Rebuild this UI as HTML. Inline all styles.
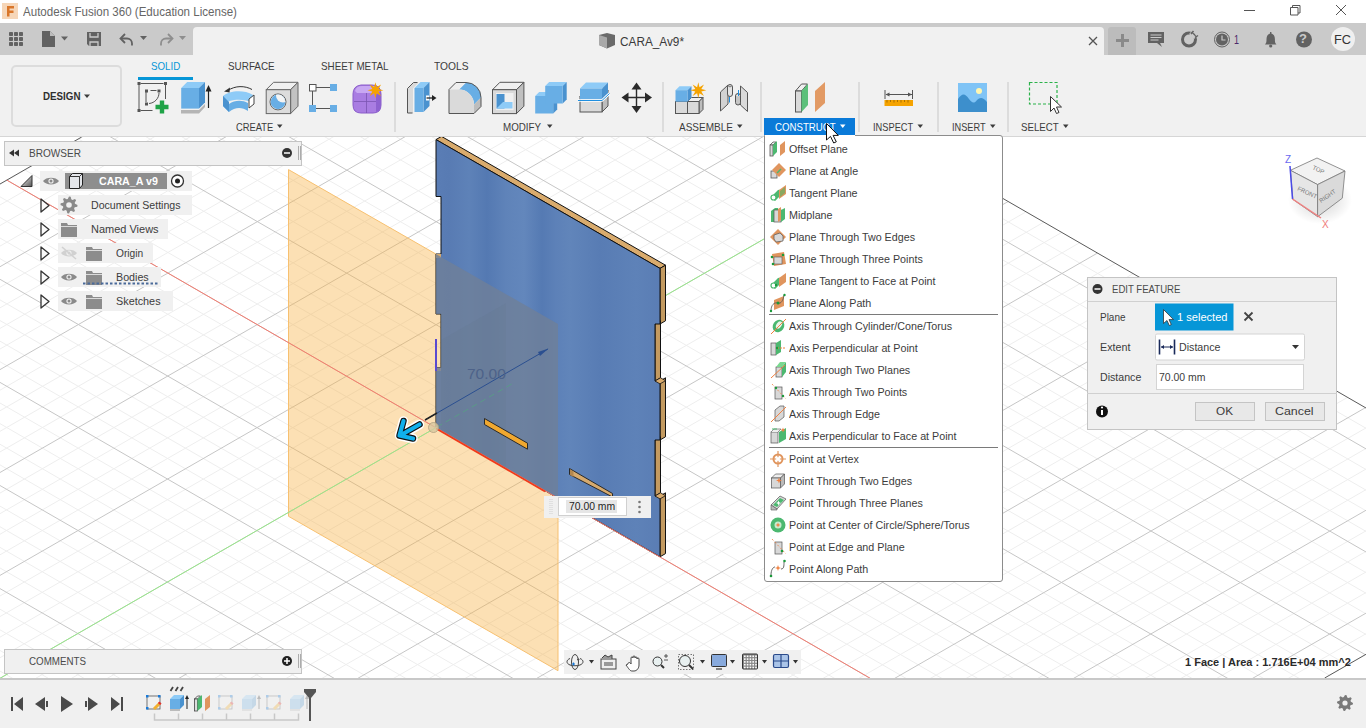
<!DOCTYPE html>
<html><head><meta charset="utf-8"><style>
html,body{margin:0;padding:0}
body{width:1366px;height:728px;overflow:hidden;position:relative;background:#fff;font-family:"Liberation Sans",sans-serif}
.t{position:absolute;white-space:nowrap;transform-origin:0 0}
.r{position:absolute}
</style></head><body>
<div class="r" style="left:0px;top:0px;width:1366px;height:23px;background:#ffffff;"></div>
<div class="t" style="left:23px;top:5px;font-size:13px;line-height:13px;color:#666666;transform:scaleX(0.8890);">Autodesk Fusion 360 (Education License)</div>
<div class="r" style="left:0px;top:23px;width:1366px;height:32px;background:#cacaca;"></div>
<div class="r" style="left:193px;top:27px;width:911px;height:28px;background:#f1f1f1;border-radius:4px 4px 0 0;"></div>
<div class="t" style="left:620px;top:36px;font-size:12px;line-height:12px;color:#3a3a3a;transform:scaleX(0.9825);">CARA_Av9*</div>
<div class="r" style="left:1108px;top:27px;width:28px;height:28px;background:#bcbcbc;border-radius:3px 3px 0 0;"></div>
<div class="r" style="left:0px;top:55px;width:1366px;height:81px;background:#f1f1f1;"></div>
<div class="r" style="left:0px;top:136px;width:1366px;height:1px;background:#d6d6d6;"></div>
<div class="r" style="left:11px;top:65px;width:111px;height:62px;background:#f1f1f1;border:2px solid #dcdcdc;border-radius:5px;box-sizing:border-box;"></div>
<div class="t" style="left:42.5px;top:91px;font-size:11px;line-height:11px;color:#2e2e2e;font-weight:bold;transform:scaleX(0.8889);">DESIGN</div>
<div class="t" style="left:151px;top:61px;font-size:11px;line-height:11px;color:#0696d7;transform:scaleX(0.8870);">SOLID</div>
<div class="r" style="left:138px;top:77px;width:55px;height:3px;background:#0696d7;"></div>
<div class="t" style="left:228px;top:61px;font-size:11px;line-height:11px;color:#3c3c3c;transform:scaleX(0.8989);">SURFACE</div>
<div class="t" style="left:321px;top:61px;font-size:11px;line-height:11px;color:#3c3c3c;transform:scaleX(0.8950);">SHEET METAL</div>
<div class="t" style="left:434px;top:61px;font-size:11px;line-height:11px;color:#3c3c3c;transform:scaleX(0.9297);">TOOLS</div>
<div class="t" style="left:236px;top:122px;font-size:11px;line-height:11px;color:#3c3c3c;transform:scaleX(0.8514);">CREATE</div>
<div class="t" style="left:503px;top:122px;font-size:11px;line-height:11px;color:#3c3c3c;transform:scaleX(0.8882);">MODIFY</div>
<div class="t" style="left:679px;top:122px;font-size:11px;line-height:11px;color:#3c3c3c;transform:scaleX(0.9100);">ASSEMBLE</div>
<div class="r" style="left:764px;top:118px;width:91px;height:17px;background:#0a7ad8;"></div>
<div class="t" style="left:775px;top:122px;font-size:11px;line-height:11px;color:#ffffff;transform:scaleX(0.8793);">CONSTRUCT</div>
<div class="t" style="left:873px;top:122px;font-size:11px;line-height:11px;color:#3c3c3c;transform:scaleX(0.8430);">INSPECT</div>
<div class="t" style="left:952px;top:122px;font-size:11px;line-height:11px;color:#3c3c3c;transform:scaleX(0.8346);">INSERT</div>
<div class="t" style="left:1021px;top:122px;font-size:11px;line-height:11px;color:#3c3c3c;transform:scaleX(0.8829);">SELECT</div>
<div class="r" style="left:394px;top:82px;width:2px;height:50px;background:#dcdcdc;"></div>
<div class="r" style="left:662px;top:82px;width:2px;height:50px;background:#dcdcdc;"></div>
<div class="r" style="left:760px;top:82px;width:2px;height:50px;background:#dcdcdc;"></div>
<div class="r" style="left:858px;top:82px;width:2px;height:50px;background:#dcdcdc;"></div>
<div class="r" style="left:937px;top:82px;width:2px;height:50px;background:#dcdcdc;"></div>
<div class="r" style="left:1007px;top:82px;width:2px;height:50px;background:#dcdcdc;"></div>
<svg width="1366" height="137" style="position:absolute;left:0;top:0"><rect x="9" y="32" width="4" height="4" rx="0.7" fill="#626262"/><rect x="9" y="37" width="4" height="4" rx="0.7" fill="#626262"/><rect x="9" y="42" width="4" height="4" rx="0.7" fill="#626262"/><rect x="14" y="32" width="4" height="4" rx="0.7" fill="#626262"/><rect x="14" y="37" width="4" height="4" rx="0.7" fill="#626262"/><rect x="14" y="42" width="4" height="4" rx="0.7" fill="#626262"/><rect x="19" y="32" width="4" height="4" rx="0.7" fill="#626262"/><rect x="19" y="37" width="4" height="4" rx="0.7" fill="#626262"/><rect x="19" y="42" width="4" height="4" rx="0.7" fill="#626262"/><path d="M42,31h8l5,5v11h-13z" fill="#626262"/><path d="M50,31v5h5" fill="#bdbdbd"/><polygon points="61,36.5 68,36.5 64.5,40.5" fill="#626262"/><path d="M87,32h14v14h-12l-2,-2z" fill="#626262"/><path d="M90,33v4h8v-4M90,46v-4h8v4" stroke="#cacaca" stroke-width="1.3" fill="none"/><path d="M121,38.5h6a5,5 0 0,1 5,5v2" stroke="#626262" stroke-width="1.8" fill="none"/><path d="M125,34l-4.5,4.5l4.5,4.5" stroke="#626262" stroke-width="1.8" fill="none"/><polygon points="140,36 147,36 143.5,40" fill="#626262"/><path d="M172,38.5h-6a5,5 0 0,0 -5,5v2" stroke="#8e8e8e" stroke-width="1.8" fill="none"/><path d="M168,34l4.5,4.5l-4.5,4.5" stroke="#8e8e8e" stroke-width="1.8" fill="none"/><polygon points="179,36 186,36 182.5,40" fill="#8e8e8e"/><polygon points="599,35 607,33 615,35 615,45 607,48.5 599,45" fill="#6a6a6a"/><polygon points="599,35 607,37.5 607,48.5 599,45" fill="#a9a9a9"/><path d="M1089,37l8,8M1097,37l-8,8" stroke="#555" stroke-width="1.3"/><path d="M1122.5,34v13M1116,40.5h13" stroke="#8a8a8a" stroke-width="3"/><path d="M1148,32h16v11h-4l2,4l-5,-4h-9z" fill="#626262"/><path d="M1150.5,35h11M1150.5,37.5h11M1150.5,40h8" stroke="#cacaca" stroke-width="1"/><circle cx="1189" cy="39.5" r="6.5" stroke="#626262" stroke-width="3" fill="none"/><path d="M1190,33l5,5" stroke="#cacaca" stroke-width="2.5"/><path d="M1191,34l2.5,-3M1195,37.5l3,-2" stroke="#626262" stroke-width="1.5"/><circle cx="1222" cy="39.5" r="7.5" stroke="#626262" stroke-width="1" fill="none"/><circle cx="1222" cy="39.5" r="6" fill="#626262"/><path d="M1222,35.5v4.5h3.5" stroke="#cacaca" stroke-width="1.2" fill="none"/><path d="M1265,44.5c1.5,-1.5 1.5,-3 1.5,-5.5c0,-3 1.5,-5 3.5,-5.5v-1.5h1.4v1.5c2,0.5 3.5,2.5 3.5,5.5c0,2.5 0,4 1.5,5.5z" fill="#626262"/><circle cx="1270.7" cy="46" r="1.6" fill="#626262"/><circle cx="1304" cy="39.5" r="8" fill="#626262"/><circle cx="1343" cy="39" r="12" fill="#efefef"/><path d="M1244,10.5h11" stroke="#555" stroke-width="1"/><path d="M1290.5,7.5h7.5v7.5h-7.5z M1292.5,7.5v-2h7.5v7.5h-2" stroke="#555" stroke-width="1" fill="none"/><path d="M1336,5l10,10M1346,5l-10,10" stroke="#555" stroke-width="1"/><rect x="2" y="3" width="16" height="16" fill="#f6d6b8"/><path d="M7,6h7v2.5h-4.5v2h4v2.5h-4v3.5h-2.5z" fill="#d9762a"/><g stroke="#555" stroke-width="1" fill="none"><path d="M140.5,83.5h23M139,85v24M165.5,85v14M140.5,110.5h12M150.5,90.5h6M146,92v10M159,93c0,5 -4,10 -10,10.5"/></g><rect x="137.5" y="82" width="3" height="3" fill="#555"/><rect x="164" y="82" width="3" height="3" fill="#555"/><rect x="137.5" y="109" width="3" height="3" fill="#555"/><rect x="145" y="89.5" width="3" height="3" fill="#555"/><rect x="157.5" y="89.5" width="3" height="3" fill="#555"/><rect x="145" y="102.5" width="3" height="3" fill="#555"/><path d="M162,100.5v13M155.5,107h13" stroke="#1fa347" stroke-width="4.4"/><polygon points="181,110 199,110 205,104 205,107 199,113.5 181,113.5" fill="#b5b5b5"/><polygon points="181.2,88 187.2,82 205.0,82 199.0,88" fill="#8ecbf7" stroke="none" stroke-width="1" stroke-linejoin="round"/><polygon points="199.0,88 205.0,82 205.0,102.6 199.0,108.6" fill="#4a92cf" stroke="none" stroke-width="1" stroke-linejoin="round"/><rect x="181.2" y="88" width="17.8" height="20.6" fill="#68aee5" stroke="none" stroke-width="1"/><path d="M208.5,108V90" stroke="#222" stroke-width="1.2"/><polygon points="205.5,91.5 211.5,91.5 208.5,85" fill="#222"/><path d="M223,96c6,-5 20,-7 30,-1v8c-10,-5 -24,-4 -30,2z" fill="#8ecbf7"/><path d="M223,96v10l6,6c6,-5 13,-5 19,-1v-8c-6,-3 -13,-3 -19,1z" fill="#68aee5"/><path d="M223,96l6,6v10l-6,-6z" fill="#4a92cf"/><path d="M249,99l5,-4v9l-5,4z" fill="#fff" stroke="#444" stroke-width="1"/><path d="M252,89.5c-7,-4 -17,-4 -24,1" stroke="#333" stroke-width="1" fill="none"/><polygon points="224,91.5 230,87.5 229.5,92.5" fill="#333"/><polygon points="266.2,89.7 273.59999999999997,82.3 297.99999999999994,82.3 290.59999999999997,89.7" fill="#f0f0f0" stroke="#666" stroke-width="1" stroke-linejoin="round"/><polygon points="290.59999999999997,89.7 297.99999999999994,82.3 297.99999999999994,106.19999999999999 290.59999999999997,113.6" fill="#c2c2c2" stroke="#666" stroke-width="1" stroke-linejoin="round"/><rect x="266.2" y="89.7" width="24.4" height="23.9" fill="#dcdcdc" stroke="#666" stroke-width="1"/><defs><clipPath id="hc"><circle cx="278" cy="101.9" r="7.3"/></clipPath></defs><circle cx="278" cy="101.9" r="8" fill="#f4f4f4" stroke="#666" stroke-width="1"/><g clip-path="url(#hc)"><circle cx="278" cy="101.9" r="8" fill="#68aee5"/><circle cx="283" cy="95.5" r="7" fill="#f4f4f4"/></g><path d="M316,87.5h14M312.5,91v14M316,108.5h14" stroke="#555" stroke-width="1"/><rect x="309.5" y="84.5" width="6.5" height="6.5" fill="#fff" stroke="#555" stroke-width="1"/><rect x="330" y="84" width="7" height="7" fill="#68aee5"/><rect x="309" y="105" width="7" height="7" fill="#68aee5"/><rect x="330" y="105" width="7" height="7" fill="#68aee5"/><path d="M353,94q0,-8 8,-9h11q9,0 9,9v11q0,8 -8,8h-12q-8,0 -8,-8z" fill="#a97de2" stroke="#8a5cca" stroke-width="1"/><path d="M355,91q1,-5 7,-5h10q6,0 7,5l-2,2h-20z" fill="#c8a8f2"/><path d="M376,94l5,-2v13q0,6 -5,7z" fill="#8e62d0"/><path d="M354,101.5h22M366.5,93v20" stroke="#7b55b2" stroke-width="0.8"/><polygon points="375.4,82.2 376.7,87.1 381.1,84.5 378.5,88.9 383.4,90.2 378.5,91.5 381.1,95.9 376.7,93.3 375.4,98.2 374.1,93.3 369.7,95.9 372.3,91.5 367.4,90.2 372.3,88.9 369.7,84.5 374.1,87.1" fill="#f5a300"/><path d="M407.5,88.5l6,-6h5l-5.5,6v24.5h-5.5z" fill="#dadada"/><path d="M412.5,113h-5v-24.5l6,-6h4" stroke="#555" stroke-width="1" fill="none" stroke-linejoin="round"/><polygon points="414.5,88 420.5,82 429.5,82 423.5,88" fill="#8ecbf7" stroke="none" stroke-width="1" stroke-linejoin="round"/><polygon points="423.5,88 429.5,82 429.5,106 423.5,112" fill="#4a92cf" stroke="none" stroke-width="1" stroke-linejoin="round"/><rect x="414.5" y="88" width="9" height="24" fill="#68aee5" stroke="none" stroke-width="1"/><rect x="426" y="95.5" width="3" height="5" fill="#fff"/><path d="M426.5,98h7" stroke="#222" stroke-width="1.3"/><polygon points="432,95 436.5,98 432,101" fill="#222"/><path d="M459,89.5a15,15 0 0,1 15,15l7,-7a15,15 0 0,0 -15,-15z" fill="#68aee5"/><polygon points="449,89.5 456,82.5 466,82.5 459,89.5" fill="#efefef"/><polygon points="474,104.5 481,97.5 481,106.5 474,113.5" fill="#bdbdbd"/><path d="M449,89.5h10a15,15 0 0,1 15,15v9h-25z" fill="#dadada"/><path d="M449,113.5v-24l7,-7h10M466,82.5a15,15 0 0,1 15,15v9l-7,7h-25" stroke="#555" stroke-width="1" fill="none" stroke-linejoin="round"/><polygon points="492.5,89.7 499.9,82.3 523.9,82.3 516.5,89.7" fill="#f0f0f0" stroke="#555" stroke-width="1" stroke-linejoin="round"/><polygon points="516.5,89.7 523.9,82.3 523.9,106.19999999999999 516.5,113.6" fill="#c0c0c0" stroke="#555" stroke-width="1" stroke-linejoin="round"/><rect x="492.5" y="89.7" width="24" height="23.9" fill="#dadada" stroke="#555" stroke-width="1"/><rect x="496" y="93" width="17.5" height="17" fill="#f0f0f0"/><rect x="496.5" y="94" width="8" height="14.5" fill="#4a92cf"/><polygon points="496.5,108.5 503,102 512.5,102 512.5,108.5" fill="#8ecbf7"/><polygon points="535.2,96 539.2,92 557.2,92 553.2,96" fill="#8ecbf7" stroke="none" stroke-width="1" stroke-linejoin="round"/><polygon points="553.2,96 557.2,92 557.2,109.5 553.2,113.5" fill="#4a92cf" stroke="none" stroke-width="1" stroke-linejoin="round"/><rect x="535.2" y="96" width="18" height="17.5" fill="#68aee5" stroke="none" stroke-width="1"/><polygon points="545.2,86 549.2,82 566.7,82 562.7,86" fill="#8ecbf7" stroke="none" stroke-width="1" stroke-linejoin="round"/><polygon points="562.7,86 566.7,82 566.7,99.5 562.7,103.5" fill="#4a92cf" stroke="none" stroke-width="1" stroke-linejoin="round"/><rect x="545.2" y="86" width="17.5" height="17.5" fill="#68aee5" stroke="none" stroke-width="1"/><polygon points="580,96.5 586,90.5 608,90.5 602,96.5" fill="#efefef" stroke="#555" stroke-width="1" stroke-linejoin="round"/><polygon points="602,96.5 608,90.5 608,106.0 602,112.0" fill="#bdbdbd" stroke="#555" stroke-width="1" stroke-linejoin="round"/><rect x="580" y="96.5" width="22" height="15.5" fill="#dadada" stroke="#555" stroke-width="1"/><polygon points="580,88.5 586,82.5 608,82.5 602,88.5" fill="#8ecbf7" stroke="none" stroke-width="1" stroke-linejoin="round"/><polygon points="602,88.5 608,82.5 608,93.5 602,99.5" fill="#4a92cf" stroke="none" stroke-width="1" stroke-linejoin="round"/><rect x="580" y="88.5" width="22" height="11" fill="#68aee5" stroke="none" stroke-width="1"/><path d="M578,100.5h24l7.5,-7" stroke="#fff" stroke-width="2.5" fill="none"/><path d="M578,100.5h24l7.5,-7" stroke="#1f8fe0" stroke-width="1" fill="none"/><path d="M636.5,86v23M625,97.5h23" stroke="#2a2a2a" stroke-width="1.4"/><polygon points="636.5,82.5 641.5,89.5 631.5,89.5" fill="#2a2a2a"/><polygon points="636.5,113 641.5,106 631.5,106" fill="#2a2a2a"/><polygon points="621.5,97.5 628.5,92.5 628.5,102.5" fill="#2a2a2a"/><polygon points="652,97.5 645,92.5 645,102.5" fill="#2a2a2a"/><polygon points="675.5,101.5 675.5,101.5 687.5,101.5 687.5,101.5" fill="#efefef" stroke="#555" stroke-width="1" stroke-linejoin="round"/><polygon points="687.5,101.5 687.5,101.5 687.5,113.5 687.5,113.5" fill="#bdbdbd" stroke="#555" stroke-width="1" stroke-linejoin="round"/><rect x="675.5" y="101.5" width="12" height="12" fill="#dadada" stroke="#555" stroke-width="1"/><polygon points="687.5,101.5 691.5,97.5 703.0,97.5 699.0,101.5" fill="#efefef" stroke="#555" stroke-width="1" stroke-linejoin="round"/><polygon points="699.0,101.5 703.0,97.5 703.0,109.5 699.0,113.5" fill="#bdbdbd" stroke="#555" stroke-width="1" stroke-linejoin="round"/><rect x="687.5" y="101.5" width="11.5" height="12" fill="#dadada" stroke="#555" stroke-width="1"/><polygon points="675.5,90.2 679.5,86.2 691.5,86.2 687.5,90.2" fill="#8ecbf7" stroke="none" stroke-width="1" stroke-linejoin="round"/><polygon points="687.5,90.2 691.5,86.2 691.5,97.7 687.5,101.7" fill="#4a92cf" stroke="none" stroke-width="1" stroke-linejoin="round"/><rect x="675.5" y="90.2" width="12" height="11.5" fill="#68aee5" stroke="none" stroke-width="1"/><polygon points="698.3,82.2 699.5,87.2 704.0,84.5 701.3,89.0 706.3,90.2 701.3,91.4 704.0,95.9 699.5,93.2 698.3,98.2 697.1,93.2 692.6,95.9 695.3,91.4 690.3,90.2 695.3,89.0 692.6,84.5 697.1,87.2" fill="#f5a300"/><polygon points="720.5,92 728,85 728,104 720.5,111" fill="#d2d2d2" stroke="#555" stroke-width="1" stroke-linejoin="round"/><rect x="727.5" y="84.5" width="5" height="12" rx="2.5" fill="#e4e4e4" stroke="#555" stroke-width="1"/><ellipse cx="730" cy="86.5" rx="1.8" ry="0.8" fill="#888"/><polygon points="740.5,86 747.5,92.5 747.5,111.5 740.5,105" fill="#dadada" stroke="#555" stroke-width="1" stroke-linejoin="round"/><rect x="735.5" y="93.5" width="5" height="11.5" rx="2.5" fill="#c6c6c6" stroke="#555" stroke-width="1"/><ellipse cx="738" cy="95.5" rx="1.8" ry="0.8" fill="#eee"/><path d="M729.5,97v5.5M738.5,90v6" stroke="#1f8fe0" stroke-width="1"/><path d="M795.5,91l6,-7h6l-6,7z" fill="#efefef" stroke="#555" stroke-width="1"/><rect x="795.5" y="91" width="6" height="21" fill="#dadada" stroke="#555" stroke-width="1"/><polygon points="801.5,91 808,84 808,105 801.5,112" fill="#5cc07a"/><polygon points="815,91 825,82 825,103 815,112" fill="#e29a64"/><rect x="884.5" y="100" width="28.5" height="6" fill="#f5a300"/><path d="M887,100v2.5M890.5,100v2M894,100v2.5M897.5,100v2M901,100v2.5M904.5,100v2M908,100v2.5" stroke="#8a5a00" stroke-width="0.7"/><path d="M885,90v9M912.5,90v9M886,94.5h26" stroke="#555" stroke-width="1"/><polygon points="885.5,94.5 889.5,92.5 889.5,96.5" fill="#555"/><polygon points="912,94.5 908,92.5 908,96.5" fill="#555"/><rect x="958" y="83" width="29" height="29" fill="#80c4f6"/><path d="M958,99c4,-6 7,-6 11,0c3,4 5,5 8,1c3,-3 6,-3 10,2v10h-29z" fill="#3d8fcc"/><circle cx="979" cy="91" r="3" fill="#fff6b0"/><rect x="1029.5" y="82.5" width="27.5" height="21.5" fill="none" stroke="#2bb24a" stroke-width="1.2" stroke-dasharray="3,2"/><path d="M1050.5,96.5v15l3.5,-3.5l2.5,5.5l2.5,-1l-2.5,-5.5h5z" fill="#fff" stroke="#333" stroke-width="1"/><polygon points="277,124.5 282.5,124.5 279.75,128" fill="#3c3c3c"/><polygon points="547,124.5 552.5,124.5 549.75,128" fill="#3c3c3c"/><polygon points="737,124.5 742.5,124.5 739.75,128" fill="#3c3c3c"/><polygon points="917.5,124.5 923.0,124.5 920.25,128" fill="#3c3c3c"/><polygon points="990,124.5 995.5,124.5 992.75,128" fill="#3c3c3c"/><polygon points="1063,124.5 1068.5,124.5 1065.75,128" fill="#3c3c3c"/><polygon points="840,124.5 845.5,124.5 842.75,128" fill="#fff"/><polygon points="84,94.5 90,94.5 87,98" fill="#3c3c3c"/></svg>
<div class="t" style="left:1234px;top:34px;font-size:12px;line-height:12px;color:#4a2a6a;transform:scaleX(0.7494);">1</div>
<div class="t" style="left:1334px;top:34px;font-size:12px;line-height:12px;color:#333333;transform:scaleX(1.0625);">FC</div>
<div class="t" style="left:1299px;top:32px;font-size:13px;line-height:13px;color:#cacaca;font-weight:bold">?</div>
<svg id="vp" width="1366" height="728" style="position:absolute;left:0;top:0">
<defs><clipPath id="vpc"><rect x="0" y="137" width="1366" height="541"/></clipPath><clipPath id="gridc"><polygon points="0,184.0 81.7,137 896.4,137 1366,408.0 1366,654.3 1324.7,678 0,678"/></clipPath></defs>
<g clip-path="url(#vpc)"><rect x="0" y="137" width="1366" height="541" fill="#ffffff"/><g clip-path="url(#gridc)"><path d="M-10,-1046.15L1376,-246.43M-10,-530.17L1376,-1327.12M-10,-1025.53L1376,-225.81M-10,-509.59L1376,-1306.54M-10,-1004.91L1376,-205.19M-10,-489.01L1376,-1285.96M-10,-984.29L1376,-184.57M-10,-468.43L1376,-1265.38M-10,-943.05L1376,-143.33M-10,-427.27L1376,-1224.22M-10,-922.43L1376,-122.71M-10,-406.69L1376,-1203.64M-10,-901.81L1376,-102.09M-10,-386.11L1376,-1183.06M-10,-881.19L1376,-81.47M-10,-365.53L1376,-1162.48M-10,-839.95L1376,-40.23M-10,-324.37L1376,-1121.32M-10,-819.33L1376,-19.61M-10,-303.79L1376,-1100.74M-10,-798.71L1376,1.01M-10,-283.21L1376,-1080.16M-10,-778.09L1376,21.63M-10,-262.63L1376,-1059.58M-10,-736.85L1376,62.87M-10,-221.47L1376,-1018.42M-10,-716.23L1376,83.49M-10,-200.89L1376,-997.84M-10,-695.61L1376,104.11M-10,-180.31L1376,-977.26M-10,-674.99L1376,124.73M-10,-159.73L1376,-956.68M-10,-633.75L1376,165.97M-10,-118.57L1376,-915.52M-10,-613.13L1376,186.59M-10,-97.99L1376,-894.94M-10,-592.51L1376,207.21M-10,-77.41L1376,-874.36M-10,-571.89L1376,227.83M-10,-56.83L1376,-853.78M-10,-530.65L1376,269.07M-10,-15.67L1376,-812.62M-10,-510.03L1376,289.69M-10,4.91L1376,-792.04M-10,-489.41L1376,310.31M-10,25.49L1376,-771.46M-10,-468.79L1376,330.93M-10,46.07L1376,-750.88M-10,-427.55L1376,372.17M-10,87.23L1376,-709.72M-10,-406.93L1376,392.79M-10,107.81L1376,-689.14M-10,-386.31L1376,413.41M-10,128.39L1376,-668.56M-10,-365.69L1376,434.03M-10,148.97L1376,-647.98M-10,-324.45L1376,475.27M-10,190.13L1376,-606.82M-10,-303.83L1376,495.89M-10,210.71L1376,-586.24M-10,-283.21L1376,516.51M-10,231.29L1376,-565.66M-10,-262.59L1376,537.13M-10,251.87L1376,-545.08M-10,-221.35L1376,578.37M-10,293.03L1376,-503.92M-10,-200.73L1376,598.99M-10,313.61L1376,-483.34M-10,-180.11L1376,619.61M-10,334.19L1376,-462.76M-10,-159.49L1376,640.23M-10,354.77L1376,-442.18M-10,-118.25L1376,681.47M-10,395.93L1376,-401.02M-10,-97.63L1376,702.09M-10,416.51L1376,-380.44M-10,-77.01L1376,722.71M-10,437.09L1376,-359.86M-10,-56.39L1376,743.33M-10,457.67L1376,-339.28M-10,-15.15L1376,784.57M-10,498.83L1376,-298.12M-10,5.47L1376,805.19M-10,519.41L1376,-277.54M-10,26.09L1376,825.81M-10,539.99L1376,-256.96M-10,46.71L1376,846.43M-10,560.57L1376,-236.38M-10,87.95L1376,887.67M-10,601.73L1376,-195.22M-10,108.57L1376,908.29M-10,622.31L1376,-174.64M-10,129.19L1376,928.91M-10,642.89L1376,-154.06M-10,149.81L1376,949.53M-10,663.47L1376,-133.48M-10,191.05L1376,990.77M-10,704.63L1376,-92.32M-10,211.67L1376,1011.39M-10,725.21L1376,-71.74M-10,232.29L1376,1032.01M-10,745.79L1376,-51.16M-10,252.91L1376,1052.63M-10,766.37L1376,-30.58M-10,294.15L1376,1093.87M-10,807.53L1376,10.58M-10,314.77L1376,1114.49M-10,828.11L1376,31.16M-10,335.39L1376,1135.11M-10,848.69L1376,51.74M-10,356.01L1376,1155.73M-10,869.27L1376,72.32M-10,397.25L1376,1196.97M-10,910.43L1376,113.48M-10,417.87L1376,1217.59M-10,931.01L1376,134.06M-10,438.49L1376,1238.21M-10,951.59L1376,154.64M-10,459.11L1376,1258.83M-10,972.17L1376,175.22M-10,500.35L1376,1300.07M-10,1013.33L1376,216.38M-10,520.97L1376,1320.69M-10,1033.91L1376,236.96M-10,541.59L1376,1341.31M-10,1054.49L1376,257.54M-10,562.21L1376,1361.93M-10,1075.07L1376,278.12M-10,603.45L1376,1403.17M-10,1116.23L1376,319.28M-10,624.07L1376,1423.79M-10,1136.81L1376,339.86M-10,644.69L1376,1444.41M-10,1157.39L1376,360.44M-10,665.31L1376,1465.03M-10,1177.97L1376,381.02M-10,706.55L1376,1506.27M-10,1219.13L1376,422.18M-10,727.17L1376,1526.89M-10,1239.71L1376,442.76M-10,747.79L1376,1547.51M-10,1260.29L1376,463.34M-10,768.41L1376,1568.13M-10,1280.87L1376,483.92M-10,809.65L1376,1609.37M-10,1322.03L1376,525.08M-10,830.27L1376,1629.99M-10,1342.61L1376,545.66M-10,850.89L1376,1650.61M-10,1363.19L1376,566.24M-10,871.51L1376,1671.23M-10,1383.77L1376,586.82M-10,912.75L1376,1712.47M-10,1424.93L1376,627.98M-10,933.37L1376,1733.09M-10,1445.51L1376,648.56M-10,953.99L1376,1753.71M-10,1466.09L1376,669.14M-10,974.61L1376,1774.33M-10,1486.67L1376,689.72M-10,1015.85L1376,1815.57M-10,1527.83L1376,730.88M-10,1036.47L1376,1836.19M-10,1548.41L1376,751.46M-10,1057.09L1376,1856.81M-10,1568.99L1376,772.04M-10,1077.71L1376,1877.43M-10,1589.57L1376,792.62M-10,1118.95L1376,1918.67M-10,1630.73L1376,833.78M-10,1139.57L1376,1939.29M-10,1651.31L1376,854.36M-10,1160.19L1376,1959.91M-10,1671.89L1376,874.94M-10,1180.81L1376,1980.53M-10,1692.47L1376,895.52M-10,1222.05L1376,2021.77M-10,1733.63L1376,936.68M-10,1242.67L1376,2042.39M-10,1754.21L1376,957.26M-10,1263.29L1376,2063.01M-10,1774.79L1376,977.84M-10,1283.91L1376,2083.63M-10,1795.37L1376,998.42M-10,1325.15L1376,2124.87M-10,1836.53L1376,1039.58M-10,1345.77L1376,2145.49M-10,1857.11L1376,1060.16M-10,1366.39L1376,2166.11M-10,1877.69L1376,1080.74M-10,1387.01L1376,2186.73M-10,1898.27L1376,1101.32" stroke="#eeeeee" stroke-width="1" fill="none"/><path d="M-10,-1066.77L1376,-267.05M-10,-550.75L1376,-1347.70M-10,-963.67L1376,-163.95M-10,-447.85L1376,-1244.80M-10,-860.57L1376,-60.85M-10,-344.95L1376,-1141.90M-10,-757.47L1376,42.25M-10,-242.05L1376,-1039.00M-10,-654.37L1376,145.35M-10,-139.15L1376,-936.10M-10,-551.27L1376,248.45M-10,-36.25L1376,-833.20M-10,-448.17L1376,351.55M-10,66.65L1376,-730.30M-10,-345.07L1376,454.65M-10,169.55L1376,-627.40M-10,-241.97L1376,557.75M-10,272.45L1376,-524.50M-10,-138.87L1376,660.85M-10,375.35L1376,-421.60M-10,-35.77L1376,763.95M-10,478.25L1376,-318.70M-10,67.33L1376,867.05M-10,581.15L1376,-215.80M-10,170.43L1376,970.15M-10,684.05L1376,-112.90M-10,273.53L1376,1073.25M-10,786.95L1376,-10.00M-10,376.63L1376,1176.35M-10,889.85L1376,92.90M-10,479.73L1376,1279.45M-10,992.75L1376,195.80M-10,582.83L1376,1382.55M-10,1095.65L1376,298.70M-10,685.93L1376,1485.65M-10,1198.55L1376,401.60M-10,789.03L1376,1588.75M-10,1301.45L1376,504.50M-10,892.13L1376,1691.85M-10,1404.35L1376,607.40M-10,995.23L1376,1794.95M-10,1507.25L1376,710.30M-10,1098.33L1376,1898.05M-10,1610.15L1376,813.20M-10,1201.43L1376,2001.15M-10,1713.05L1376,916.10M-10,1304.53L1376,2104.25M-10,1815.95L1376,1019.00" stroke="#c6c6c6" stroke-width="1" fill="none"/></g><path d="M0,184.0L81.7,137M896.4,137L1366,408.0M1366,654.3L1324.7,678" stroke="#5a5a5a" stroke-width="1" fill="none"/><polygon points="288.5,169.6 558,324 558,670.7 288.5,516.3" fill="rgb(248,178,68)" fill-opacity="0.4" stroke="#f7c070" stroke-width="1"/><polygon points="436,139.6 660,268.4 665.5,265.2 441.5,136.4" fill="#d9ab6d" stroke="#111" stroke-width="1"/><polygon points="660,268.4 665.5,265.2 665.5,320.8 660,324" fill="#c39a60" stroke="#111" stroke-width="1"/><polygon points="655,324 660.5,320.8 660.5,377.8 655,381" fill="#c39a60" stroke="#111" stroke-width="1"/><polygon points="660,381 665.5,377.8 665.5,436.8 660,440" fill="#c39a60" stroke="#111" stroke-width="1"/><polygon points="655,440 660.5,436.8 660.5,492.8 655,496" fill="#c39a60" stroke="#111" stroke-width="1"/><polygon points="660,496 665.5,492.8 665.5,553.5999999999999 660,556.8" fill="#c39a60" stroke="#111" stroke-width="1"/><defs><linearGradient id="pg" gradientUnits="userSpaceOnUse" x1="436" x2="660" y1="0" y2="0"><stop offset="0.000" stop-color="#5a7db5"/><stop offset="0.058" stop-color="#587bb3"/><stop offset="0.147" stop-color="#5e82b8"/><stop offset="0.228" stop-color="#5479b2"/><stop offset="0.312" stop-color="#5f83b9"/><stop offset="0.393" stop-color="#6387bc"/><stop offset="0.473" stop-color="#557ab3"/><stop offset="0.536" stop-color="#5d81b8"/><stop offset="0.598" stop-color="#6185ba"/><stop offset="0.732" stop-color="#587cb4"/><stop offset="0.893" stop-color="#5e82b8"/><stop offset="1.000" stop-color="#5a7db4"/></linearGradient></defs><polygon points="436,139.6 660,268.4 660,324.0 655,324.0 655,381.0 660,381.0 660,440.0 655,440.0 655,496.0 660,496.0 660,556.8 436,428.0 436,367.6 441,367.6 441,314.0 436,314.0 436,254.0 441,254.0 441,196.5 436,196.5" fill="url(#pg)" stroke="#111" stroke-width="1"/><polygon points="655,381 660,383.9 665.5,380.7 660.5,377.8" fill="#d9ab6d" stroke="#111" stroke-width="0.8"/><polygon points="655,496 660,498.9 665.5,495.7 660.5,492.8" fill="#d9ab6d" stroke="#111" stroke-width="0.8"/><polygon points="436,254 441,254 441,258 436,258" fill="#d9ab6d"/><polygon points="436,367.6 441,367.6 441,371 436,371" fill="#d9ab6d"/><polygon points="441,256.9 558,324.0 558,498.1 436,428.0 436,367.6 441,367.6 441,314.0 436,314.0 436,254.0" fill="#6f8098" fill-opacity="0.8"/><polygon points="441,340 506,303 506,468 441,431" fill="#56677f" fill-opacity="0.10"/><polygon points="484.5,418.5 527.5,443.2 527.5,449.2 484.5,424.5" fill="#f0a830" stroke="#2a2a2a" stroke-width="1"/><polygon points="569.5,468.5 612.5,493.5 612.5,497 569.5,474.5" fill="#d6aa6e" stroke="#2a2a2a" stroke-width="1" stroke-linejoin="round"/><polygon points="570,469.5 573.5,471.5 573.5,477 570,475" fill="#b5884e"/><path d="M6.8,180.1L1000,753.2" stroke="#f47c70" stroke-width="1" fill="none"/><path d="M436,428.5L545,491.5" stroke="#f03a1a" stroke-width="1.6" fill="none"/><path d="M0,678.3L437,427.0" stroke="#98e88a" stroke-width="1" fill="none"/><path d="M437,427.0L512,383.9" stroke="#5a9a88" stroke-width="1" fill="none" stroke-dasharray="6,4"/><path d="M666,295.3L1000,103.3" stroke="#98e88a" stroke-width="1" fill="none"/><path d="M436,339L436,371" stroke="#5a4ad0" stroke-width="2" fill="none"/><path d="M425,420L548,349" stroke="#2b4f90" stroke-width="1" fill="none"/><polygon points="548.5,348.5 538,352 540,356" fill="#2b4f90"/><path d="M425,420L437,413" stroke="#222" stroke-width="1.5"/><text x="467" y="379" font-family="Liberation Sans" font-size="15.5" fill="#4d6289">70.00</text><circle cx="433.5" cy="427.5" r="5" fill="#d8c8a0" fill-opacity="0.8" stroke="#b0a080" stroke-width="0.8"/><path d="M419.5,424.5L401,435M403.5,421L399.5,435.5L413,438.5" stroke="#ffffff" stroke-width="9.5" fill="none" stroke-linecap="round" stroke-linejoin="round"/><path d="M419.5,424.5L401,435M403.5,421L399.5,435.5L413,438.5" stroke="#111111" stroke-width="6.5" fill="none" stroke-linecap="round" stroke-linejoin="round"/><path d="M419.5,424.5L401,435M403.5,421L399.5,435.5L413,438.5" stroke="#10b0ec" stroke-width="4.2" fill="none" stroke-linecap="round" stroke-linejoin="round"/><defs><radialGradient id="sh"><stop offset="0" stop-color="#000" stop-opacity="0.18"/><stop offset="1" stop-color="#000" stop-opacity="0"/></radialGradient></defs><ellipse cx="1320" cy="200" rx="32" ry="24" fill="url(#sh)"/><polygon points="1317,158 1345,171 1317.6,184.6 1290.4,170.3" fill="#f2f2f2" stroke="#777" stroke-width="0.8"/><polygon points="1290.4,170.3 1317.6,184.6 1317.6,216.7 1292.9,199.4" fill="#e6e6e6" stroke="#777" stroke-width="0.8"/><polygon points="1317.6,184.6 1345,171 1342.3,198.2 1317.6,216.7" fill="#dadada" stroke="#777" stroke-width="0.8"/><text x="1312" y="169" font-size="6" fill="#777" font-family="Liberation Sans" transform="rotate(25 1312 169)">TOP</text><text x="1297" y="190" font-size="6" fill="#777" font-family="Liberation Sans" transform="rotate(25 1297 190)">FRONT</text><text x="1321" y="203" font-size="6" fill="#777" font-family="Liberation Sans" transform="rotate(-35 1321 203)">RIGHT</text><path d="M1290,166L1292.5,199" stroke="#4a4ae8" stroke-width="1.5"/><path d="M1292.5,199L1321,218" stroke="#f08080" stroke-width="1.5"/><text x="1285" y="163" font-size="10" fill="#6a6af0" font-family="Liberation Sans">Z</text><text x="1322" y="228" font-size="10" fill="#f07a7a" font-family="Liberation Sans">X</text><rect x="564" y="650" width="237" height="24" fill="#f0f0f0"/><ellipse cx="575" cy="662" rx="3.5" ry="7.5" stroke="#444" stroke-width="1" fill="none"/><path d="M570,658.5c-4,1.5 -4,5 0,6.5M580,658.5c4,1.5 4,5 0,6.5M570,665c3,1 7,1 10,0" stroke="#444" stroke-width="1" fill="none"/><path d="M572,664h3M573.5,662.5v3" stroke="#1a7ad8" stroke-width="1.2"/><path d="M577,659.5h2.5M578.2,658.3v2.5" stroke="#444" stroke-width="0.8"/><polygon points="589,660 594,660 591.5,663.5" fill="#333"/><rect x="601" y="659" width="15" height="10" fill="#eee" stroke="#444" stroke-width="1"/><rect x="604" y="662" width="9" height="4" fill="#999"/><path d="M602,658l3,-3l3,2l4,-2v4" stroke="#444" stroke-width="1" fill="#999"/><path d="M628,664c0,-2 2,-2 3,0v-6c0,-1.5 2,-1.5 2,0v-1c0,-1.5 2,-1.5 2,0v1c0,-1.5 2,-1.5 2,0v1c0,-1.5 2,-1.5 2,0v6c0,3 -2,6 -5,6h-2c-2,0 -3,-2 -6,-6z" fill="#fff" stroke="#333" stroke-width="0.9"/><circle cx="657.5" cy="661.5" r="4.5" fill="#e8f0f0" stroke="#333" stroke-width="1"/><path d="M661,665l3,3" stroke="#333" stroke-width="2"/><path d="M664,656h4M666,654v4M664,660h4" stroke="#333" stroke-width="0.8"/><rect x="678.5" y="654.5" width="15" height="15" fill="none" stroke="#555" stroke-width="0.8" stroke-dasharray="1.5,1.5"/><circle cx="685" cy="661" r="5.5" fill="#e8f0f0" stroke="#333" stroke-width="1"/><path d="M689,665l4,4" stroke="#333" stroke-width="2"/><polygon points="700,660 705,660 702.5,663.5" fill="#333"/><rect x="711.5" y="654.5" width="15" height="12" rx="1" fill="#88aadd" stroke="#333" stroke-width="1"/><path d="M716,669h6" stroke="#333" stroke-width="1.2"/><polygon points="730,660 735,660 732.5,663.5" fill="#333"/><rect x="742.5" y="654" width="15" height="15" rx="1" fill="#888" stroke="#333" stroke-width="1"/><rect x="744.0" y="655.5" width="1.6" height="1.6" fill="#fff"/><rect x="744.0" y="658.3" width="1.6" height="1.6" fill="#fff"/><rect x="744.0" y="661.1" width="1.6" height="1.6" fill="#fff"/><rect x="744.0" y="663.9" width="1.6" height="1.6" fill="#fff"/><rect x="744.0" y="666.7" width="1.6" height="1.6" fill="#fff"/><rect x="746.8" y="655.5" width="1.6" height="1.6" fill="#fff"/><rect x="746.8" y="658.3" width="1.6" height="1.6" fill="#fff"/><rect x="746.8" y="661.1" width="1.6" height="1.6" fill="#fff"/><rect x="746.8" y="663.9" width="1.6" height="1.6" fill="#fff"/><rect x="746.8" y="666.7" width="1.6" height="1.6" fill="#fff"/><rect x="749.6" y="655.5" width="1.6" height="1.6" fill="#fff"/><rect x="749.6" y="658.3" width="1.6" height="1.6" fill="#fff"/><rect x="749.6" y="661.1" width="1.6" height="1.6" fill="#fff"/><rect x="749.6" y="663.9" width="1.6" height="1.6" fill="#fff"/><rect x="749.6" y="666.7" width="1.6" height="1.6" fill="#fff"/><rect x="752.4" y="655.5" width="1.6" height="1.6" fill="#fff"/><rect x="752.4" y="658.3" width="1.6" height="1.6" fill="#fff"/><rect x="752.4" y="661.1" width="1.6" height="1.6" fill="#fff"/><rect x="752.4" y="663.9" width="1.6" height="1.6" fill="#fff"/><rect x="752.4" y="666.7" width="1.6" height="1.6" fill="#fff"/><rect x="755.2" y="655.5" width="1.6" height="1.6" fill="#fff"/><rect x="755.2" y="658.3" width="1.6" height="1.6" fill="#fff"/><rect x="755.2" y="661.1" width="1.6" height="1.6" fill="#fff"/><rect x="755.2" y="663.9" width="1.6" height="1.6" fill="#fff"/><rect x="755.2" y="666.7" width="1.6" height="1.6" fill="#fff"/><polygon points="762,660 767,660 764.5,663.5" fill="#333"/><rect x="773.5" y="654.5" width="15" height="13" rx="1.5" fill="#aac4e8" stroke="#2a4a8a" stroke-width="1.2"/><path d="M781,654.5v13M773.5,661h15" stroke="#2a4a8a" stroke-width="1.2"/><polygon points="793,660 798,660 795.5,663.5" fill="#333"/></g></svg>
<div class="t" style="left:1185px;top:657px;font-size:11px;line-height:11px;color:#2a2a2a;font-weight:bold;transform:scaleX(0.9995);">1 Face | Area : 1.716E+04 mm^2</div>
<div class="r" style="left:544px;top:496px;width:107px;height:22px;background:#f0f0f0;"></div>
<div class="r" style="left:558px;top:497px;width:69px;height:19px;background:#ffffff;border:1px solid #d0d0d0;box-sizing:border-box;"></div>
<div class="r" style="left:566px;top:500px;width:51px;height:13px;background:#e6e6e6;"></div>
<div class="t" style="left:569px;top:501px;font-size:11px;line-height:11px;color:#1e1e1e;transform:scaleX(0.9441);">70.00 mm</div>
<svg width="1366" height="728" style="position:absolute;left:0;top:0"><circle cx="639.5" cy="502" r="1.3" fill="#777"/><circle cx="639.5" cy="507" r="1.3" fill="#777"/><circle cx="639.5" cy="512" r="1.3" fill="#777"/><path d="M550,499v16M552,499v16" stroke="#c8c8c8" stroke-width="0.8" stroke-dasharray="1,1"/></svg>
<div class="r" style="left:0px;top:678px;width:1366px;height:2px;background:#c8c8c8;"></div>
<div class="r" style="left:0px;top:680px;width:1366px;height:48px;background:#f0f0f0;"></div>
<svg width="1366" height="728" style="position:absolute;left:0;top:0"><rect x="11" y="697" width="2" height="14" fill="#4a4a4a"/><polygon points="23,697 23,711 14,704" fill="#4a4a4a"/><polygon points="35,704 45,697 45,711" fill="#4a4a4a"/><rect x="46" y="701" width="2" height="6" fill="#4a4a4a"/><polygon points="61,696 73,704 61,712" fill="#4a4a4a"/><rect x="85" y="701" width="2" height="6" fill="#4a4a4a"/><polygon points="88,697 98,704 88,711" fill="#4a4a4a"/><polygon points="111,697 120,704 111,711" fill="#4a4a4a"/><rect x="121" y="697" width="2" height="14" fill="#4a4a4a"/><g opacity="1"><rect x="147" y="696" width="13" height="13" fill="none" stroke="#555" stroke-width="0.8"/><rect x="146" y="695" width="2.5" height="2.5" fill="#1a7ad8"/><rect x="158" y="695" width="2.5" height="2.5" fill="#1a7ad8"/><rect x="146" y="707" width="2.5" height="2.5" fill="#1a7ad8"/><path d="M154,709l6,-6" stroke="#f0b030" stroke-width="3"/><path d="M159,704l1.5,-1.5" stroke="#e03030" stroke-width="3"/></g><g opacity="1"><polygon points="170,699 174,695 184,695 180,699" fill="#8ecbf7" stroke="none" stroke-width="1" stroke-linejoin="round"/><polygon points="180,699 184,695 184,705 180,709" fill="#4a92cf" stroke="none" stroke-width="1" stroke-linejoin="round"/><rect x="170" y="699" width="10" height="10" fill="#68aee5" stroke="none" stroke-width="1"/><rect x="170" y="709" width="10" height="2" fill="#bbb"/><path d="M187,709v-11" stroke="#222" stroke-width="1"/><polygon points="185,699 189,699 187,695" fill="#222"/></g><path d="M170.5,691l2.5,-4M175.5,691l2.5,-4M180.5,691l2.5,-4" stroke="#444" stroke-width="1.8"/><path d="M194.5,699l3,-3h3l-3,3z" fill="#eee" stroke="#444" stroke-width="0.8"/><rect x="194.5" y="699" width="3" height="12" fill="#ddd" stroke="#444" stroke-width="0.8"/><polygon points="197.5,699 202,695 202,707 197.5,711" fill="#4cb870"/><polygon points="205,699 210,695 210,707 205,711" fill="#e0955e"/><g opacity="0.3"><rect x="219" y="696" width="13" height="13" fill="none" stroke="#555" stroke-width="0.8"/><rect x="218" y="695" width="2.5" height="2.5" fill="#1a7ad8"/><rect x="230" y="695" width="2.5" height="2.5" fill="#1a7ad8"/><rect x="218" y="707" width="2.5" height="2.5" fill="#1a7ad8"/><path d="M226,709l6,-6" stroke="#f0b030" stroke-width="3"/><path d="M231,704l1.5,-1.5" stroke="#e03030" stroke-width="3"/></g><g opacity="0.25"><polygon points="242,699 246,695 256,695 252,699" fill="#8ecbf7" stroke="none" stroke-width="1" stroke-linejoin="round"/><polygon points="252,699 256,695 256,705 252,709" fill="#4a92cf" stroke="none" stroke-width="1" stroke-linejoin="round"/><rect x="242" y="699" width="10" height="10" fill="#68aee5" stroke="none" stroke-width="1"/><rect x="242" y="709" width="10" height="2" fill="#bbb"/><path d="M259,709v-11" stroke="#222" stroke-width="1"/><polygon points="257,699 261,699 259,695" fill="#222"/></g><g opacity="0.3"><rect x="267" y="696" width="13" height="13" fill="none" stroke="#555" stroke-width="0.8"/><rect x="266" y="695" width="2.5" height="2.5" fill="#1a7ad8"/><rect x="278" y="695" width="2.5" height="2.5" fill="#1a7ad8"/><rect x="266" y="707" width="2.5" height="2.5" fill="#1a7ad8"/><path d="M274,709l6,-6" stroke="#f0b030" stroke-width="3"/><path d="M279,704l1.5,-1.5" stroke="#e03030" stroke-width="3"/></g><g opacity="0.25"><polygon points="290,699 294,695 304,695 300,699" fill="#8ecbf7" stroke="none" stroke-width="1" stroke-linejoin="round"/><polygon points="300,699 304,695 304,705 300,709" fill="#4a92cf" stroke="none" stroke-width="1" stroke-linejoin="round"/><rect x="290" y="699" width="10" height="10" fill="#68aee5" stroke="none" stroke-width="1"/><rect x="290" y="709" width="10" height="2" fill="#bbb"/><path d="M307,709v-11" stroke="#222" stroke-width="1"/><polygon points="305,699 309,699 307,695" fill="#222"/></g><path d="M154.5,713.5v6.5h144v-6.5M178.5,713.5v6.5M202.5,713.5v6.5M226.5,713.5v6.5M250.5,713.5v6.5M274.5,713.5v6.5" stroke="#c8c8c8" stroke-width="1.5" fill="none"/><polygon points="304,689 316,689 316,692 311,698 309,698 304,692" fill="#555"/><rect x="309" y="697" width="2" height="24" fill="#555"/><polygon points="1353.0,703.0 1352.8,704.6 1350.5,705.3 1350.0,706.3 1350.7,708.7 1349.4,709.7 1347.3,708.5 1346.2,708.9 1345.0,711.0 1343.4,710.8 1342.7,708.5 1341.7,708.0 1339.3,708.7 1338.3,707.4 1339.5,705.3 1339.1,704.2 1337.0,703.0 1337.2,701.4 1339.5,700.7 1340.0,699.7 1339.3,697.3 1340.6,696.3 1342.7,697.5 1343.8,697.1 1345.0,695.0 1346.6,695.2 1347.3,697.5 1348.3,698.0 1350.7,697.3 1351.7,698.6 1350.5,700.7 1350.9,701.8" fill="#7a7a7a"/><circle cx="1345" cy="703" r="2.6" fill="#f0f0f0"/></svg>
<div class="r" style="left:4px;top:141px;width:298px;height:25px;background:#f0f0f0;border:1px solid #c4c4c4;box-sizing:border-box;"></div>
<div class="t" style="left:29px;top:148px;font-size:11px;line-height:11px;color:#4a4a4a;transform:scaleX(0.9148);">BROWSER</div>
<div class="r" style="left:40px;top:171px;width:152px;height:20px;background:#f0f0f0;"></div>
<div class="r" style="left:65px;top:173px;width:102px;height:16px;background:#8e8e8e;"></div>
<div class="t" style="left:99px;top:176px;font-size:11px;line-height:11px;color:#ffffff;font-weight:bold;transform:scaleX(0.9700);">CARA_A v9</div>
<div class="r" style="left:58px;top:195px;width:134px;height:20px;background:#f0f0f0;"></div>
<div class="r" style="left:58px;top:219px;width:110px;height:20px;background:#f0f0f0;"></div>
<div class="r" style="left:58px;top:243px;width:95px;height:20px;background:#f0f0f0;"></div>
<div class="r" style="left:58px;top:267px;width:103px;height:20px;background:#f0f0f0;"></div>
<div class="r" style="left:58px;top:291px;width:115px;height:20px;background:#f0f0f0;"></div>
<div class="t" style="left:91px;top:200px;font-size:11px;line-height:11px;color:#3c3c3c;transform:scaleX(0.9634);">Document Settings</div>
<div class="t" style="left:91px;top:224px;font-size:11px;line-height:11px;color:#3c3c3c;transform:scaleX(0.9989);">Named Views</div>
<div class="t" style="left:116px;top:248px;font-size:11px;line-height:11px;color:#3c3c3c;transform:scaleX(0.9269);">Origin</div>
<div class="t" style="left:116px;top:272px;font-size:11px;line-height:11px;color:#3c3c3c;transform:scaleX(0.9716);">Bodies</div>
<div class="t" style="left:116px;top:296px;font-size:11px;line-height:11px;color:#3c3c3c;transform:scaleX(0.9850);">Sketches</div>
<svg width="1366" height="728" style="position:absolute;left:0;top:0"><polygon points="9,153 14,149.5 14,156.5" fill="#333"/><polygon points="14,153 19,149.5 19,156.5" fill="#333"/><circle cx="287" cy="153" r="5" fill="#333"/><path d="M284,153h6" stroke="#fff" stroke-width="1.5"/><path d="M298.5,146v14M300.5,146v14" stroke="#9a9a9a" stroke-width="0.8"/><defs><linearGradient id="tg" x1="0" x2="1" y1="0" y2="1"><stop offset="0" stop-color="#fff"/><stop offset="1" stop-color="#555"/></linearGradient></defs><polygon points="32,175.5 32,186.5 21,186.5" fill="url(#tg)" stroke="#333" stroke-width="1"/><path d="M43,181c3,-4.5 13,-4.5 16,0c-3,4.5 -13,4.5 -16,0z" fill="#8a8a8a"/><circle cx="51" cy="181" r="2.6" fill="#f0f0f0"/><circle cx="51" cy="181" r="1.5" fill="#8a8a8a"/><path d="M69.5,176.5l3,-3h10v11.5l-3,3.5h-10z" fill="#e4e6ea" stroke="#222" stroke-width="1" stroke-linejoin="round"/><path d="M69.5,176.5h10l3,-3M79.5,176.5v11.5" stroke="#222" stroke-width="0.9" fill="none"/><circle cx="177.5" cy="181" r="6" fill="#fff" stroke="#333" stroke-width="1.3"/><circle cx="177.5" cy="181" r="2.5" fill="#222"/><path d="M41,199l8,6.5l-8,6.5z" fill="#fafafa" stroke="#333" stroke-width="1.3" stroke-linejoin="round"/><path d="M41,223l8,6.5l-8,6.5z" fill="#fafafa" stroke="#333" stroke-width="1.3" stroke-linejoin="round"/><path d="M41,247l8,6.5l-8,6.5z" fill="#fafafa" stroke="#333" stroke-width="1.3" stroke-linejoin="round"/><path d="M41,271l8,6.5l-8,6.5z" fill="#fafafa" stroke="#333" stroke-width="1.3" stroke-linejoin="round"/><path d="M41,295l8,6.5l-8,6.5z" fill="#fafafa" stroke="#333" stroke-width="1.3" stroke-linejoin="round"/><polygon points="77.5,205.0 77.3,206.7 74.7,207.3 74.1,208.4 75.0,211.0 73.7,212.1 71.3,210.7 70.2,211.0 69.0,213.5 67.3,213.3 66.7,210.7 65.6,210.1 63.0,211.0 61.9,209.7 63.3,207.3 63.0,206.2 60.5,205.0 60.7,203.3 63.3,202.7 63.9,201.6 63.0,199.0 64.3,197.9 66.7,199.3 67.8,199.0 69.0,196.5 70.7,196.7 71.3,199.3 72.4,199.9 75.0,199.0 76.1,200.3 74.7,202.7 75.0,203.8" fill="#8a8a8a"/><circle cx="69" cy="205" r="2.8" fill="#f0f0f0"/><path d="M61,223h6l1,2h9v12h-16z" fill="#8c8c8c"/><path d="M61,226.5h16" stroke="#f0f0f0" stroke-width="0.8"/><g opacity="0.35"><path d="M61,253c3,-4.5 13,-4.5 16,0c-3,4.5 -13,4.5 -16,0z" fill="#9a9a9a"/><circle cx="69" cy="253" r="2.6" fill="#f0f0f0"/><circle cx="69" cy="253" r="1.5" fill="#9a9a9a"/><path d="M62,247l14,12" stroke="#9a9a9a" stroke-width="1.5"/></g><path d="M86,247h6l1,2h9v12h-16z" fill="#8c8c8c"/><path d="M86,250.5h16" stroke="#f0f0f0" stroke-width="0.8"/><path d="M61,277c3,-4.5 13,-4.5 16,0c-3,4.5 -13,4.5 -16,0z" fill="#8a8a8a"/><circle cx="69" cy="277" r="2.6" fill="#f0f0f0"/><circle cx="69" cy="277" r="1.5" fill="#8a8a8a"/><path d="M86,271h6l1,2h9v12h-16z" fill="#8c8c8c"/><path d="M86,274.5h16" stroke="#f0f0f0" stroke-width="0.8"/><path d="M83,283.5h76" stroke="#4a6a9a" stroke-width="2" stroke-dasharray="2.5,2"/><path d="M61,301c3,-4.5 13,-4.5 16,0c-3,4.5 -13,4.5 -16,0z" fill="#8a8a8a"/><circle cx="69" cy="301" r="2.6" fill="#f0f0f0"/><circle cx="69" cy="301" r="1.5" fill="#8a8a8a"/><path d="M86,295h6l1,2h9v12h-16z" fill="#8c8c8c"/><path d="M86,298.5h16" stroke="#f0f0f0" stroke-width="0.8"/></svg>
<div class="r" style="left:4px;top:649px;width:298px;height:25px;background:#f0f0f0;border:1px solid #c4c4c4;box-sizing:border-box;"></div>
<div class="t" style="left:29px;top:656px;font-size:11px;line-height:11px;color:#4a4a4a;transform:scaleX(0.8885);">COMMENTS</div>
<svg width="1366" height="728" style="position:absolute;left:0;top:0"><circle cx="287" cy="661" r="5" fill="#222"/><path d="M284,661h6M287,658v6" stroke="#fff" stroke-width="1.5"/><path d="M298.5,654v14M300.5,654v14" stroke="#9a9a9a" stroke-width="0.8"/></svg>
<div class="r" style="left:764px;top:135px;width:239px;height:447px;background:#ffffff;border:1px solid #8c8c8c;box-sizing:border-box;border-radius:0 3px 3px 3px;"></div>
<div class="r" style="left:765px;top:135px;width:90px;height:1px;background:#ffffff;"></div>
<div class="t" style="left:789px;top:144px;font-size:11px;line-height:11px;color:#3c3c3c;transform:scaleX(0.9750);">Offset Plane</div>
<div class="t" style="left:789px;top:166px;font-size:11px;line-height:11px;color:#3c3c3c;transform:scaleX(0.9750);">Plane at Angle</div>
<div class="t" style="left:789px;top:188px;font-size:11px;line-height:11px;color:#3c3c3c;transform:scaleX(0.9750);">Tangent Plane</div>
<div class="t" style="left:789px;top:210px;font-size:11px;line-height:11px;color:#3c3c3c;transform:scaleX(0.9750);">Midplane</div>
<div class="t" style="left:789px;top:232px;font-size:11px;line-height:11px;color:#3c3c3c;transform:scaleX(0.9750);">Plane Through Two Edges</div>
<div class="t" style="left:789px;top:254px;font-size:11px;line-height:11px;color:#3c3c3c;transform:scaleX(0.9750);">Plane Through Three Points</div>
<div class="t" style="left:789px;top:276px;font-size:11px;line-height:11px;color:#3c3c3c;transform:scaleX(0.9750);">Plane Tangent to Face at Point</div>
<div class="t" style="left:789px;top:298px;font-size:11px;line-height:11px;color:#3c3c3c;transform:scaleX(0.9750);">Plane Along Path</div>
<div class="t" style="left:789px;top:321px;font-size:11px;line-height:11px;color:#3c3c3c;transform:scaleX(0.9750);">Axis Through Cylinder/Cone/Torus</div>
<div class="t" style="left:789px;top:343px;font-size:11px;line-height:11px;color:#3c3c3c;transform:scaleX(0.9750);">Axis Perpendicular at Point</div>
<div class="t" style="left:789px;top:365px;font-size:11px;line-height:11px;color:#3c3c3c;transform:scaleX(0.9750);">Axis Through Two Planes</div>
<div class="t" style="left:789px;top:387px;font-size:11px;line-height:11px;color:#3c3c3c;transform:scaleX(0.9750);">Axis Through Two Points</div>
<div class="t" style="left:789px;top:409px;font-size:11px;line-height:11px;color:#3c3c3c;transform:scaleX(0.9750);">Axis Through Edge</div>
<div class="t" style="left:789px;top:431px;font-size:11px;line-height:11px;color:#3c3c3c;transform:scaleX(0.9750);">Axis Perpendicular to Face at Point</div>
<div class="t" style="left:789px;top:454px;font-size:11px;line-height:11px;color:#3c3c3c;transform:scaleX(0.9750);">Point at Vertex</div>
<div class="t" style="left:789px;top:476px;font-size:11px;line-height:11px;color:#3c3c3c;transform:scaleX(0.9750);">Point Through Two Edges</div>
<div class="t" style="left:789px;top:498px;font-size:11px;line-height:11px;color:#3c3c3c;transform:scaleX(0.9750);">Point Through Three Planes</div>
<div class="t" style="left:789px;top:520px;font-size:11px;line-height:11px;color:#3c3c3c;transform:scaleX(0.9750);">Point at Center of Circle/Sphere/Torus</div>
<div class="t" style="left:789px;top:542px;font-size:11px;line-height:11px;color:#3c3c3c;transform:scaleX(0.9750);">Point at Edge and Plane</div>
<div class="t" style="left:789px;top:564px;font-size:11px;line-height:11px;color:#3c3c3c;transform:scaleX(0.9750);">Point Along Path</div>
<div class="r" style="left:769px;top:314px;width:229px;height:1px;background:#7a7a7a;"></div>
<div class="r" style="left:769px;top:447px;width:229px;height:1px;background:#7a7a7a;"></div>
<svg width="1366" height="728" style="position:absolute;left:0;top:0"><path d="M770,145l3,-3h3l-3,3z" fill="#eee" stroke="#555" stroke-width="0.8"/><rect x="770" y="145" width="3" height="11" fill="#d8d8d8" stroke="#555" stroke-width="0.8"/><polygon points="773,145 777,141 777,152 773,156" fill="#4cb870"/><polygon points="780,145 785,141 785,152 780,156" fill="#e0955e"/><rect x="771" y="171" width="6" height="7" fill="#d8d8d8" stroke="#555" stroke-width="0.8"/><polygon points="779,163 786,170 779,177 772,170" fill="#e0955e"/><path d="M777,173l4,-4" stroke="#4cb870" stroke-width="1.5"/><path d="M771,197l7,-7a3,3 0 0,1 4,4l-7,7" fill="#4cb870"/><circle cx="773.5" cy="197.5" r="2.5" fill="#fff" stroke="#4cb870" stroke-width="1.2"/><polygon points="779,190 786,185 786,194 779,199" fill="#e0955e"/><polygon points="780,191 785,187 785,193 780,197" fill="#8aa860"/><path d="M771,211l4,-3h3v14h-3l-4,0z" fill="#4cb870"/><rect x="774" y="210" width="7" height="12" fill="#d8d8d8" stroke="#555" stroke-width="0.7"/><polygon points="778,209 781,207 781,220 778,222" fill="#e0955e"/><path d="M781,210l4,-2v11l-4,3" fill="#4cb870"/><polygon points="778,229 786,237 778,245 770,237" fill="#e0955e"/><polygon points="774,235 780,233 783,236 783,241 776,242 774,239" fill="#d8d8d8" stroke="#555" stroke-width="0.7"/><polygon points="772,254 784,252 786,264 774,266" fill="#e0955e"/><rect x="774" y="257" width="8" height="7" fill="#d8d8d8" stroke="#555" stroke-width="0.6"/><circle cx="772" cy="257" r="1.3" fill="#1a9a3a"/><circle cx="783" cy="255" r="1.3" fill="#1a9a3a"/><circle cx="773" cy="264" r="1.3" fill="#1a9a3a"/><path d="M771,285l7,-7a3,3 0 0,1 4,4l-7,7" fill="#4cb870"/><circle cx="773.5" cy="285.5" r="2.5" fill="#fff" stroke="#4cb870" stroke-width="1.2"/><polygon points="779,278 786,273 786,282 779,287" fill="#e0955e"/><circle cx="776" cy="285" r="1.2" fill="#1a9a3a"/><polygon points="774,300 784,296 784,306 774,310" fill="#e0955e"/><path d="M771,311c0,-6 3,-9 7,-8c3,1 5,-2 6,-8" stroke="#555" stroke-width="0.8" fill="none"/><circle cx="771" cy="311" r="1.2" fill="#1a9a3a"/><circle cx="784.5" cy="295" r="1.2" fill="#1a9a3a"/><circle cx="778" cy="303" r="1.5" fill="#1a9a3a"/><ellipse cx="778.5" cy="326" rx="5.5" ry="6.5" transform="rotate(35 778.5 326)" fill="#4cb870"/><ellipse cx="779" cy="325" rx="2.5" ry="4" transform="rotate(35 779 325)" fill="#e8f5e8"/><path d="M771,334l15,-15" stroke="#f08040" stroke-width="1"/><rect x="771" y="343" width="5" height="12" fill="#d8d8d8" stroke="#555" stroke-width="0.7"/><polygon points="776,343 781,340 781,352 776,355" fill="#4cb870"/><path d="M777,348h9" stroke="#f08040" stroke-width="1" stroke-dasharray="2,1"/><circle cx="777" cy="348" r="1.2" fill="#1a9a3a"/><rect x="776" y="367" width="6" height="10" fill="#d8d8d8" stroke="#555" stroke-width="0.7"/><polygon points="782,367 786,362 786,372 782,377" fill="#4cb870"/><polygon points="776,367 780,362 786,362 782,367" fill="#7ad890"/><path d="M771,378l14,-13" stroke="#f08040" stroke-width="1"/><rect x="775" y="387" width="7" height="12" fill="#d8d8d8" stroke="#555" stroke-width="0.7"/><path d="M772,384l14,15" stroke="#f08040" stroke-width="0.8" stroke-dasharray="2,2"/><circle cx="776" cy="388" r="1.2" fill="#1a9a3a"/><circle cx="783" cy="396" r="1.2" fill="#1a9a3a"/><path d="M775,421v-11l5,-4h4v11l-5,4z" fill="#d8d8d8" stroke="#555" stroke-width="0.7"/><path d="M771,422l15,-15" stroke="#f08040" stroke-width="1"/><rect x="771" y="432" width="7" height="11" fill="#d8d8d8" stroke="#555" stroke-width="0.7"/><path d="M771,432l3,-3h7l-3,3" fill="#eee" stroke="#555" stroke-width="0.6"/><polygon points="779,432 786,428 786,439 779,443" fill="#4cb870"/><path d="M772,429h5" stroke="#4cb870" stroke-width="1"/><polygon points="783.0,427.5 783.7,429.3 785.5,430.0 783.7,430.7 783.0,432.5 782.3,430.7 780.5,430.0 782.3,429.3" fill="#f08040"/><circle cx="778" cy="459" r="4.5" fill="none" stroke="#e0955e" stroke-width="2"/><path d="M778,451v16M770,459h16" stroke="#e0955e" stroke-width="1.2"/><circle cx="778" cy="459" r="2" fill="#fff"/><polygon points="771.5,478 775.5,474 784.5,474 780.5,478" fill="#eee" stroke="#555" stroke-width="0.7" stroke-linejoin="round"/><polygon points="780.5,478 784.5,474 784.5,484 780.5,488" fill="#bbb" stroke="#555" stroke-width="0.7" stroke-linejoin="round"/><rect x="771.5" y="478" width="9" height="10" fill="#d8d8d8" stroke="#555" stroke-width="0.7"/><polygon points="779.0,477.5 779.8,479.7 782.0,480.5 779.8,481.3 779.0,483.5 778.2,481.3 776.0,480.5 778.2,479.7" fill="#f08040"/><polygon points="771,505 780,496 786,499 777,509" fill="#d8d8d8" stroke="#555" stroke-width="0.7"/><polygon points="773,505 780,498 784,500 777,507" fill="#4cb870"/><polygon points="771,505 771,510 777,510 777,509" fill="#bbb" stroke="#555" stroke-width="0.6"/><polygon points="778.5,500.5 779.2,502.3 781.0,503.0 779.2,503.7 778.5,505.5 777.8,503.7 776.0,503.0 777.8,502.3" fill="#fff"/><circle cx="778" cy="525" r="7.5" fill="#4cb870"/><circle cx="778" cy="525" r="3.5" fill="#c8ecd0"/><polygon points="778.0,522.5 778.7,524.3 780.5,525.0 778.7,525.7 778.0,527.5 777.3,525.7 775.5,525.0 777.3,524.3" fill="#f08040"/><rect x="775" y="542" width="7" height="12" fill="#d8d8d8" stroke="#555" stroke-width="0.7"/><path d="M772,539l14,15" stroke="#f08040" stroke-width="0.8" stroke-dasharray="2,2"/><circle cx="782" cy="551" r="1.3" fill="#1a9a3a"/><path d="M771,575c0,-5 2,-8 4,-8M781,569c3,0 3,-3 3,-7" stroke="#555" stroke-width="0.9" fill="none"/><circle cx="771" cy="576" r="1.3" fill="#1a9a3a"/><circle cx="784.5" cy="561" r="1.3" fill="#1a9a3a"/><polygon points="778.0,565.0 778.8,567.2 781.0,568.0 778.8,568.8 778.0,571.0 777.2,568.8 775.0,568.0 777.2,567.2" fill="#f08040"/></svg>
<div class="r" style="left:1087px;top:277px;width:250px;height:153px;background:#f0f0f0;border:1px solid #c4c4c4;box-sizing:border-box;"></div>
<div class="r" style="left:1088px;top:301px;width:248px;height:1px;background:#d0d0d0;"></div>
<div class="t" style="left:1112px;top:284px;font-size:11px;line-height:11px;color:#4a4a4a;transform:scaleX(0.8719);">EDIT FEATURE</div>
<div class="r" style="left:1087px;top:393px;width:250px;height:1px;background:#d0d0d0;"></div>
<svg width="1366" height="728" style="position:absolute;left:0;top:0"><circle cx="1097.5" cy="289" r="5" fill="#333"/><path d="M1094.5,289h6" stroke="#fff" stroke-width="1.5"/><rect x="1155" y="303.5" width="78.5" height="27" fill="#0696d7"/><path d="M1163.5,309.5v14l3.5,-3l2.3,5l2,-0.9l-2.3,-5h4.5z" fill="#fff" stroke="#333" stroke-width="0.8"/><path d="M1244.5,312.5l8,8M1252.5,312.5l-8,8" stroke="#444" stroke-width="1.8"/><rect x="1155.5" y="334" width="149" height="26" rx="1.5" fill="#fff" stroke="#d4d4d4" stroke-width="1"/><path d="M1159.5,339.5v15M1174.5,339.5v15" stroke="#1a2a5a" stroke-width="1.6"/><path d="M1161,347h12" stroke="#1a2a5a" stroke-width="1"/><polygon points="1161,347 1164,345 1164,349" fill="#1a2a5a"/><polygon points="1173,347 1170,345 1170,349" fill="#1a2a5a"/><polygon points="1292,345 1299,345 1295.5,349" fill="#333"/><rect x="1156.5" y="364.5" width="147" height="25" fill="#fff" stroke="#d4d4d4" stroke-width="1"/><circle cx="1102" cy="411.5" r="6" fill="#111"/><rect x="1101" y="410" width="2" height="5" fill="#fff"/><circle cx="1102" cy="407.5" r="1.1" fill="#fff"/><rect x="1195.5" y="402.5" width="59" height="18" fill="#e8e8e8" stroke="#c4c4c4" stroke-width="1"/><rect x="1265.5" y="402.5" width="59" height="18" fill="#e8e8e8" stroke="#c4c4c4" stroke-width="1"/></svg>
<div class="t" style="left:1100px;top:312px;font-size:11px;line-height:11px;color:#3c3c3c;transform:scaleX(0.9057);">Plane</div>
<div class="t" style="left:1100px;top:342px;font-size:11px;line-height:11px;color:#3c3c3c;transform:scaleX(0.9770);">Extent</div>
<div class="t" style="left:1100px;top:372px;font-size:11px;line-height:11px;color:#3c3c3c;transform:scaleX(0.9647);">Distance</div>
<div class="t" style="left:1177px;top:312px;font-size:11px;line-height:11px;color:#ffffff;transform:scaleX(1.0062);">1 selected</div>
<div class="t" style="left:1179px;top:342px;font-size:11px;line-height:11px;color:#3c3c3c;transform:scaleX(0.9693);">Distance</div>
<div class="t" style="left:1159px;top:372px;font-size:11px;line-height:11px;color:#3c3c3c;transform:scaleX(0.9502);">70.00 mm</div>
<div class="t" style="left:1216px;top:406px;font-size:11px;line-height:11px;color:#3c3c3c;transform:scaleX(1.0688);">OK</div>
<div class="t" style="left:1275px;top:406px;font-size:11px;line-height:11px;color:#3c3c3c;transform:scaleX(1.1270);">Cancel</div>
<svg width="1366" height="728" style="position:absolute;left:0;top:0"><path d="M826.5,123.5v16.5l4,-3.6l3.2,6.6l2.6,-1.2l-3.2,-6.4h5.2z" fill="#fff" stroke="#111" stroke-width="1" stroke-linejoin="round"/></svg>
</body></html>
